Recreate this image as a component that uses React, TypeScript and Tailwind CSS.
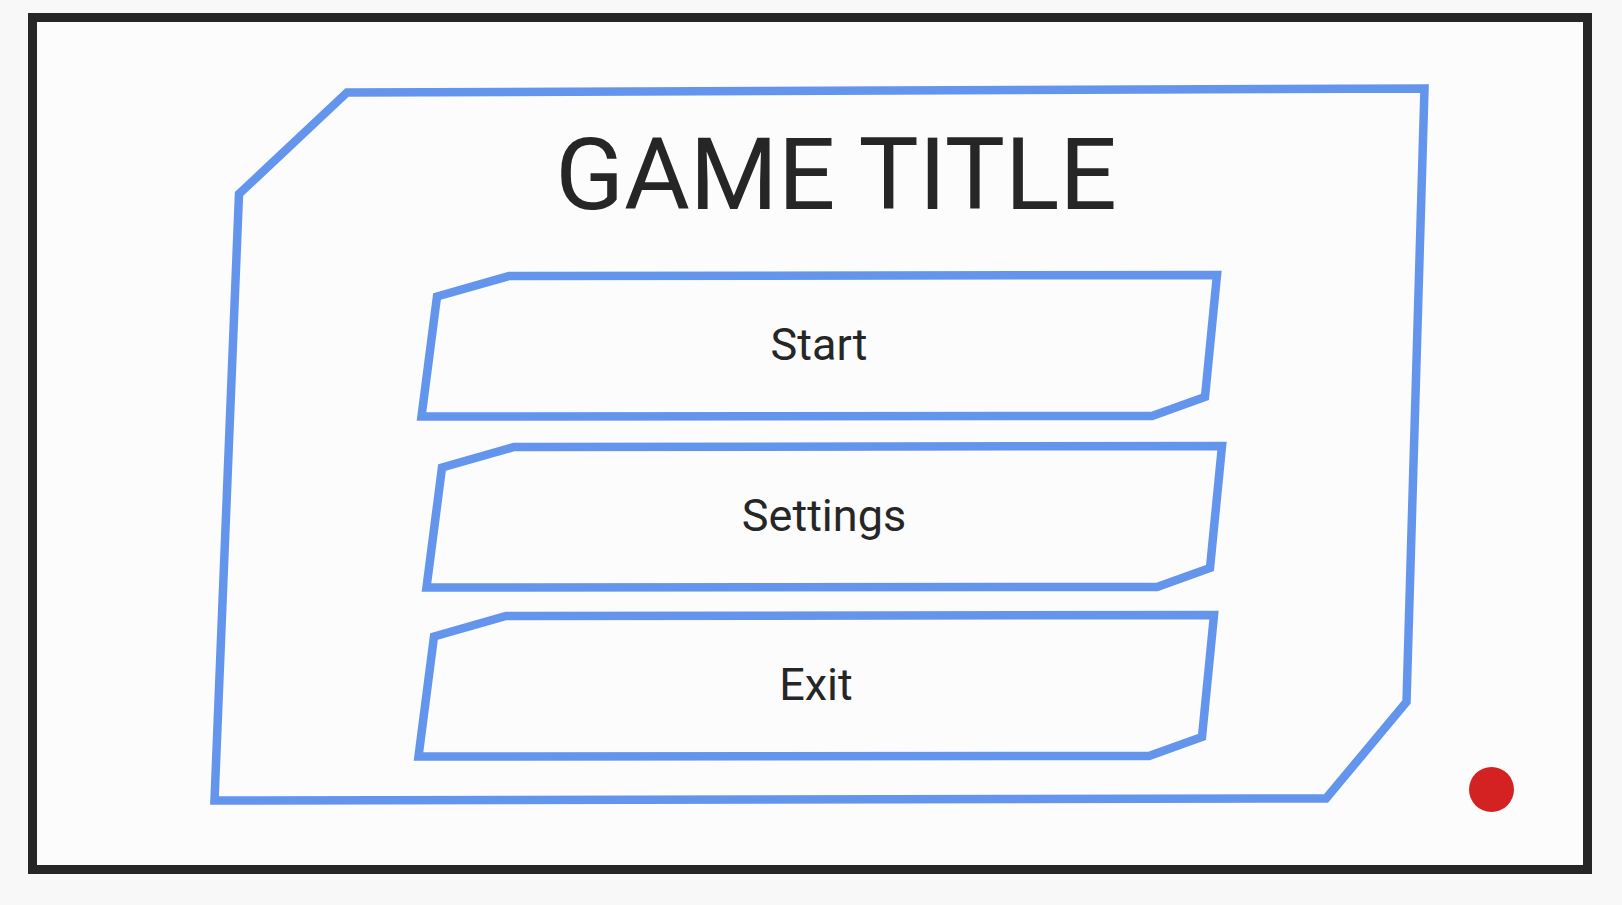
const panelPoints = "139,10.5 31,112 6.5,718.5 1118,716.5 1198.5,620 1216.5,6.5";
const buttonPoints = "20,25.5 92,5 800,4 788,126 735,145 4.5,145.5";

type MenuButtonProps = {
  label: string;
  className: string;
};

function MenuButton({ label, className }: MenuButtonProps) {
  return (
    <button
      type="button"
      className={`relative flex h-[150px] w-[804px] items-center justify-center pb-1 ${className}`}
    >
      <svg
        className="absolute inset-0 h-full w-full overflow-visible"
        viewBox="0 0 804 150"
        fill="none"
      >
        <polygon
          points={buttonPoints}
          stroke="#6495ED"
          strokeWidth="8.5"
          strokeLinejoin="miter"
        />
      </svg>
      <span className="relative text-[45px] leading-none text-[#262626]">
        {label}
      </span>
    </button>
  );
}

export default function App() {
  return (
    <div
      className="h-[905px] w-full overflow-hidden bg-[#f8f8f8] pt-[13px] pl-[28px]"
      style={{ fontFamily: "Roboto, 'Liberation Sans', sans-serif" }}
    >
      <div className="flex h-[861px] w-[1564px] items-start border-[9px] border-[#262626] bg-[#fcfcfc]">
        {/* main menu panel */}
        <div className="relative mt-[60px] ml-[171px] flex h-[726px] w-[1224px] shrink-0 flex-col items-start">
          <svg
            className="absolute inset-0 h-full w-full overflow-visible"
            viewBox="0 0 1224 726"
            fill="none"
          >
            <polygon
              points={panelPoints}
              stroke="#6495ED"
              strokeWidth="8.5"
              strokeLinejoin="miter"
            />
          </svg>
          <h1 className="relative mt-[42px] flex h-[100px] w-full justify-center pl-[32px] text-[101px] leading-none font-normal text-[#262626]">
            GAME TITLE
          </h1>
          <MenuButton label="Start" className="mt-[47px] ml-[209px]" />
          <MenuButton label="Settings" className="mt-[21px] ml-[214px]" />
          <MenuButton label="Exit" className="mt-[19px] ml-[206px]" />
        </div>
        {/* record indicator */}
        <div className="mt-[745px] ml-[37px] h-[45px] w-[45px] shrink-0 rounded-full bg-[#d42121]" />
      </div>
    </div>
  );
}
